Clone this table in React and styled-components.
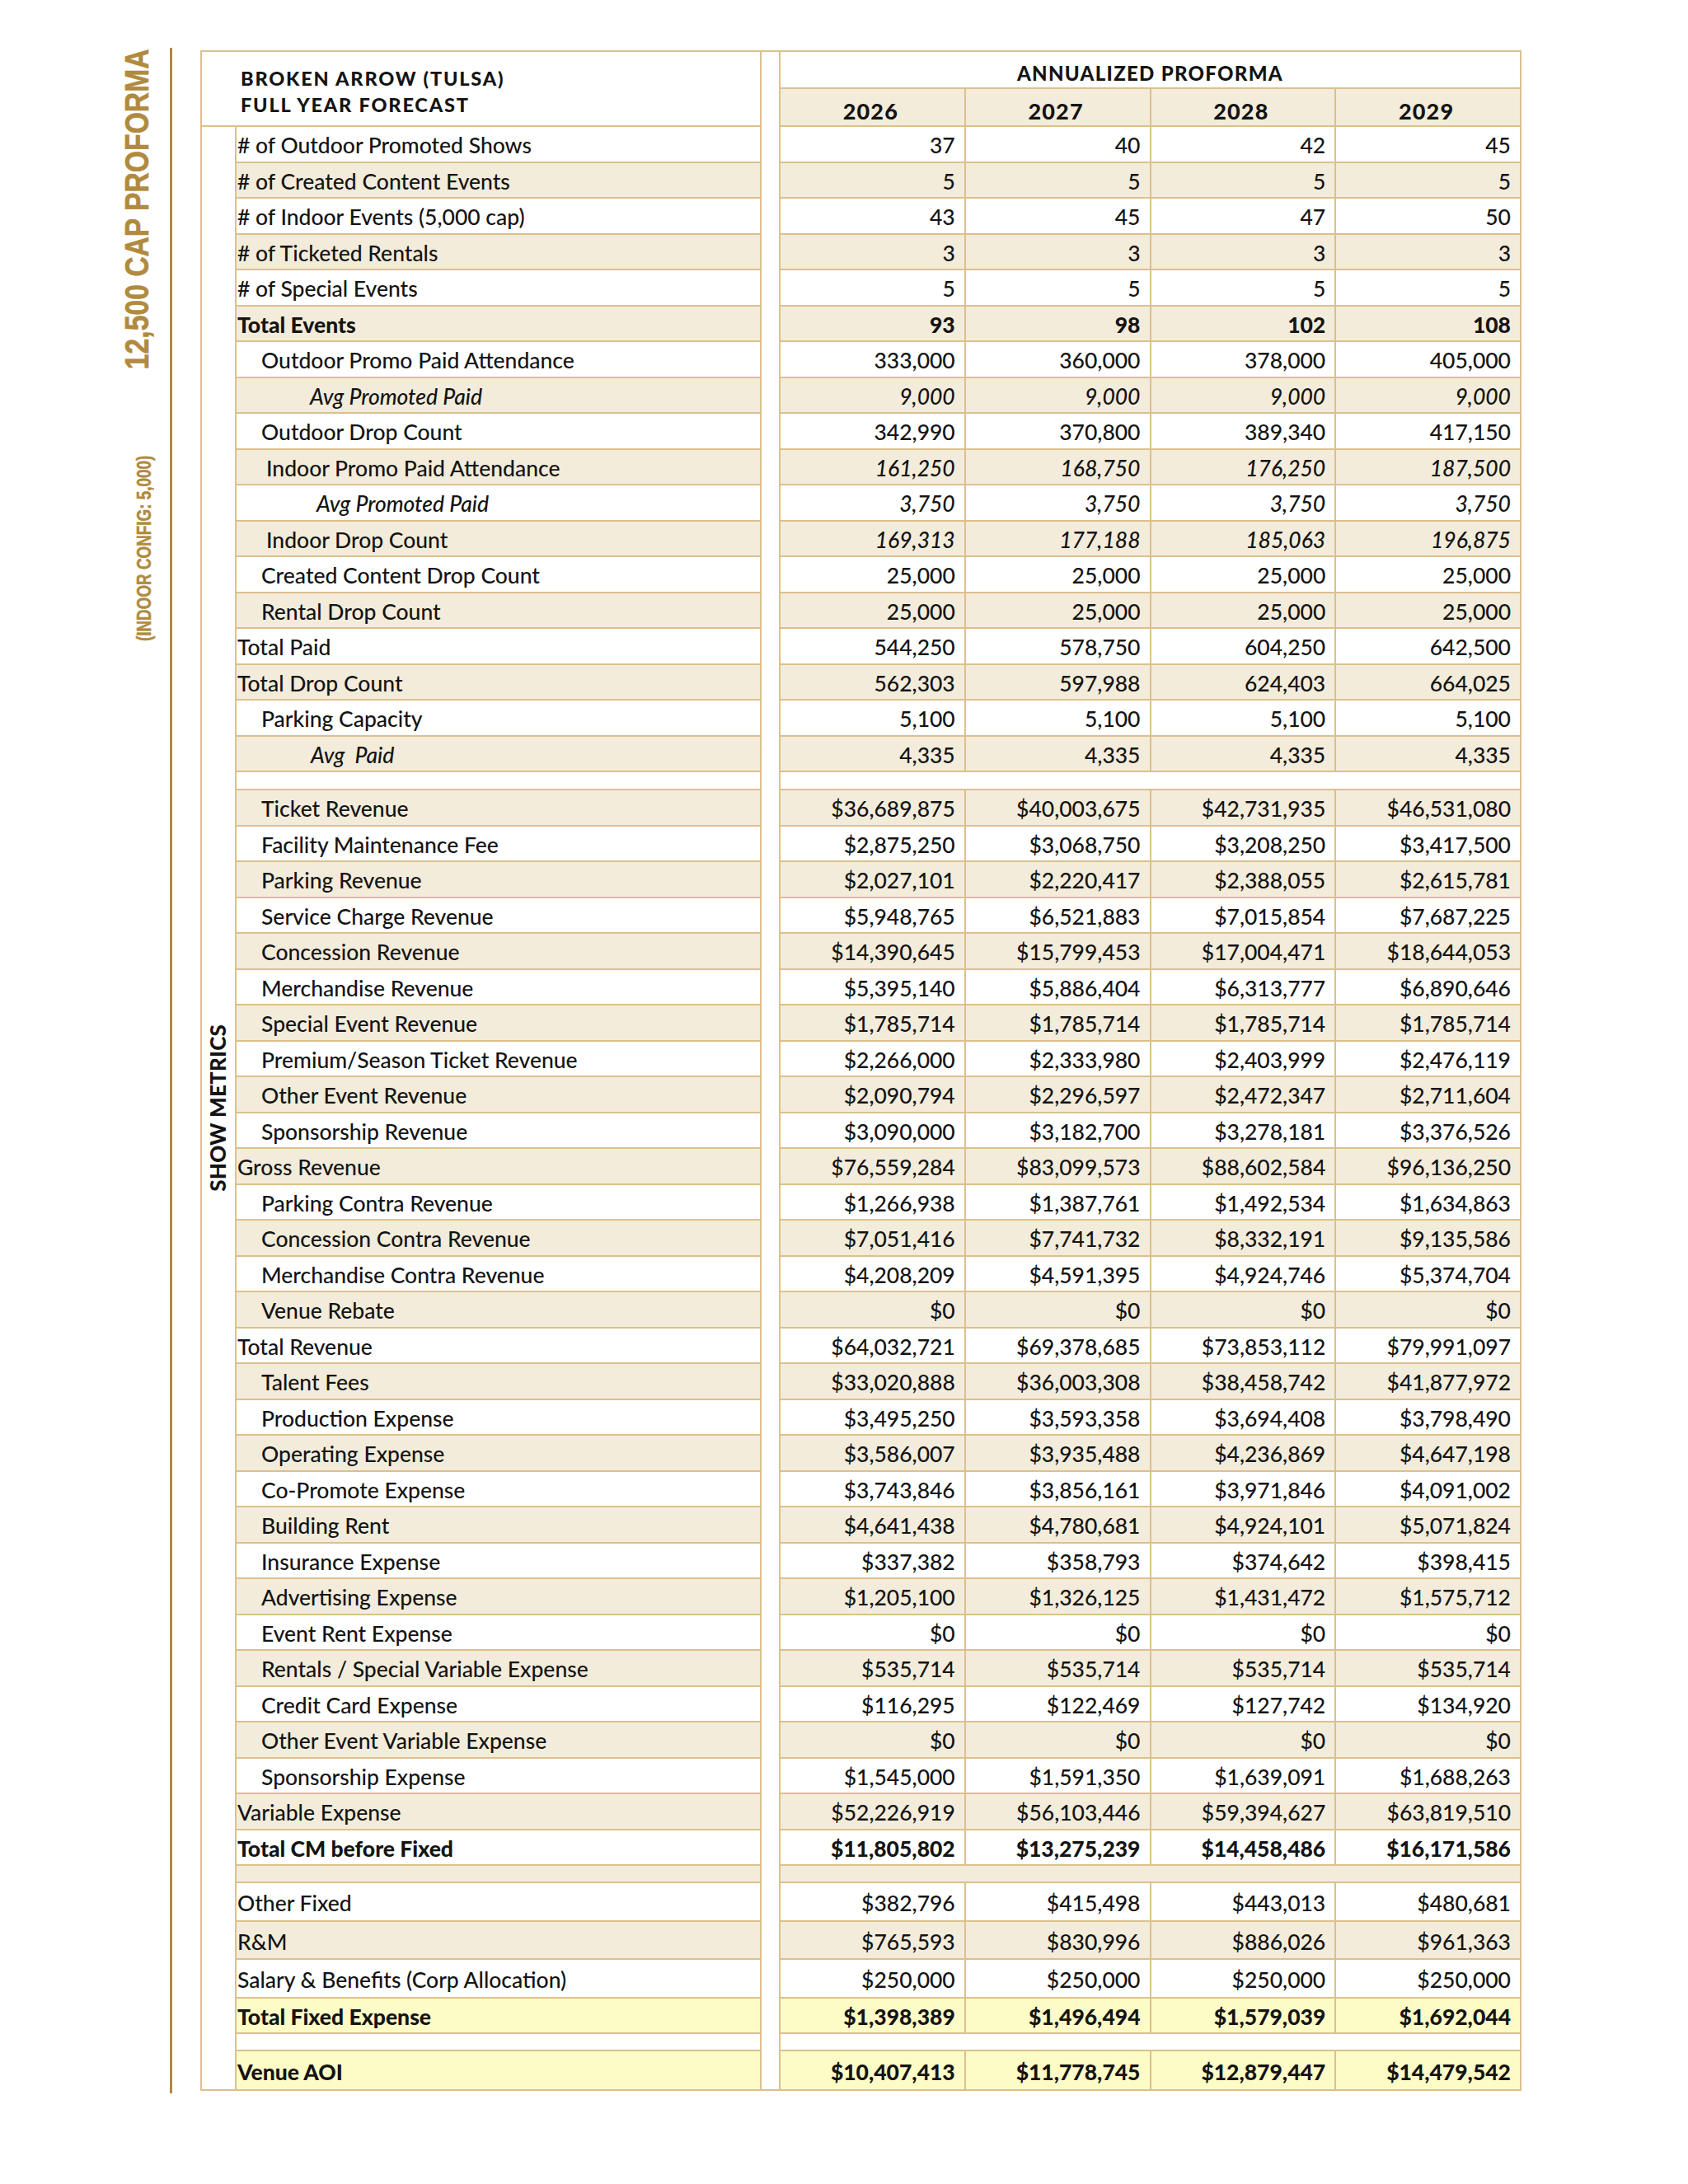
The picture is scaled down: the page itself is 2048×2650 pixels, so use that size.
import React from 'react';
import styled, { createGlobalStyle } from 'styled-components';

const GOLD = '#b08a3e';
const LINE = '#dcc08c';
const BEIGE = '#f3ecdb';
const YELLOW = '#fdfbc6';
const INK = '#141414';

const GlobalStyle = createGlobalStyle`
  html, body { margin: 0; padding: 0; background: #ffffff; }
  body { font-family: Lato, "Noto Sans", Arial, sans-serif; color: ${INK}; }
`;

const Page = styled.main`
  width: 2048px;
  min-height: 2650px;
  box-sizing: border-box;
  display: flex;
  align-items: flex-start;
  padding-top: 58px;
`;

const Side = styled.aside`
  width: 209px;
  height: 2482px;
  box-sizing: border-box;
  border-right: 3px solid ${GOLD};
  display: flex;
  flex-direction: column;
  align-items: flex-end;
  padding: 1px 0 0 0;
  gap: 105px;
  color: ${GOLD};
  font-family: "Liberation Sans", Arial, sans-serif;
  font-weight: 700;
`;

/* fixed slot holding a vertical, condensed label */
const VSlot = styled.div`
  width: ${(p) => p.$w}px;
  height: ${(p) => p.$len}px;
  margin-right: ${(p) => p.$right}px;
  display: flex;
  align-items: center;
  justify-content: center;
`;

const SideTitle = styled.h1`
  margin: 0;
  flex: none;
  writing-mode: vertical-rl;
  transform: rotate(180deg) scaleY(0.842);
  white-space: nowrap;
  line-height: 1;
  font-size: 40px;
  font-weight: 700;
  -webkit-text-stroke: 0.6px ${GOLD};
`;

const SideNote = styled.div`
  flex: none;
  writing-mode: vertical-rl;
  transform: rotate(180deg) scaleY(0.82);
  white-space: nowrap;
  line-height: 1;
  font-size: 23px;
  font-weight: 700;
  -webkit-text-stroke: 0.5px ${GOLD};
`;

const Table = styled.section`
  margin: 3px 0 0 34px;
  width: 1603px;
  box-sizing: border-box;
  border: 2px solid ${LINE};
`;

const Head = styled.header`
  display: grid;
  grid-template-columns: 42px 637px 21px repeat(4, 1fr);
  grid-template-rows: 45px 46px;
`;

const HeadTitle = styled.div`
  grid-column: 1 / 3;
  grid-row: 1 / 3;
  box-sizing: border-box;
  border-right: 2px solid ${LINE};
  border-bottom: 2px solid ${LINE};
  display: flex;
  flex-direction: column;
  justify-content: center;
  padding: 7px 0 0 47px;
  font-size: 23.5px;
  font-weight: 900;
  line-height: 32px;
  letter-spacing: 1.8px;
`;

const HeadGap = styled.div`
  grid-column: 3;
  grid-row: 1 / 3;
`;

const ProformaTitle = styled.div`
  grid-column: 4 / 8;
  grid-row: 1;
  box-sizing: border-box;
  border-left: 2px solid ${LINE};
  border-bottom: 2px solid ${LINE};
  display: flex;
  align-items: center;
  justify-content: center;
  padding: 8px 0 0 0;
  font-size: 24px;
  font-weight: 900;
  letter-spacing: 1.3px;
`;

const YearCell = styled.div`
  grid-row: 2;
  box-sizing: border-box;
  background: ${BEIGE};
  border-left: 2px solid ${LINE};
  border-bottom: 2px solid ${LINE};
  display: flex;
  align-items: center;
  justify-content: center;
  padding: 8px 4px 0 0;
  font-size: 27px;
  font-weight: 900;
  letter-spacing: 1.2px;
`;

const Body = styled.div`
  display: flex;
`;

const SectionTag = styled.div`
  width: 42px;
  box-sizing: border-box;
  border-right: 2px solid ${LINE};
  display: flex;
  align-items: center;
  justify-content: center;
`;

const SectionTagText = styled.span`
  writing-mode: vertical-rl;
  transform: rotate(180deg);
  white-space: nowrap;
  font-size: 26px;
  font-weight: 900;
  line-height: 1;
  letter-spacing: 0.2px;
  margin-left: -3px;
`;

const Rows = styled.div`
  flex: 1;
  display: flex;
  flex-direction: column;
`;

const toneColor = (tone) => (tone === 'beige' ? BEIGE : tone === 'yellow' ? YELLOW : '#ffffff');

const Row = styled.div`
  display: grid;
  grid-template-columns: 637px 21px repeat(4, 1fr);
  height: ${(p) => p.$h}px;
  font-weight: ${(p) => (p.$bold ? 900 : 500)};
`;

const LabelCell = styled.div`
  box-sizing: border-box;
  background: ${(p) => toneColor(p.$tone)};
  border-right: 2px solid ${LINE};
  border-bottom: ${(p) => (p.$last ? 'none' : `2px solid ${LINE}`)};
  display: flex;
  align-items: center;
  padding-left: ${(p) => p.$indent}px;
  padding-top: 3px;
  font-size: 26.5px;
  font-style: ${(p) => (p.$italic ? 'italic' : 'normal')};
  white-space: pre;
`;

const GapCell = styled.div`
  background: #ffffff;
`;

const ValueCell = styled.div`
  box-sizing: border-box;
  background: ${(p) => toneColor(p.$tone)};
  border-left: 2px solid ${LINE};
  border-bottom: ${(p) => (p.$last ? 'none' : `2px solid ${LINE}`)};
  display: flex;
  align-items: center;
  justify-content: flex-end;
  padding: 3px 11px 0 0;
  font-size: 26.5px;
  font-style: ${(p) => (p.$italic ? 'italic' : 'normal')};
  white-space: nowrap;
`;

const SpanCell = styled.div`
  grid-column: 3 / 7;
  box-sizing: border-box;
  background: ${(p) => toneColor(p.$tone)};
  border-left: 2px solid ${LINE};
  border-bottom: 2px solid ${LINE};
`;

const R = 43.5;

// [label, values, opts]
const rows = [
  ['# of Outdoor Promoted Shows', ['37', '40', '42', '45']],
  ['# of Created Content Events', ['5', '5', '5', '5']],
  ['# of Indoor Events (5,000 cap)', ['43', '45', '47', '50']],
  ['# of Ticketed Rentals', ['3', '3', '3', '3']],
  ['# of Special Events', ['5', '5', '5', '5']],
  ['Total Events', ['93', '98', '102', '108'], { bold: true }],
  ['Outdoor Promo Paid Attendance', ['333,000', '360,000', '378,000', '405,000'], { indent: 30 }],
  ['Avg Promoted Paid', ['9,000', '9,000', '9,000', '9,000'], { indent: 89, italic: true, valItalic: true }],
  ['Outdoor Drop Count', ['342,990', '370,800', '389,340', '417,150'], { indent: 30 }],
  ['Indoor Promo Paid Attendance', ['161,250', '168,750', '176,250', '187,500'], { indent: 36, valItalic: true }],
  ['Avg Promoted Paid', ['3,750', '3,750', '3,750', '3,750'], { indent: 97, italic: true, valItalic: true }],
  ['Indoor Drop Count', ['169,313', '177,188', '185,063', '196,875'], { indent: 36, valItalic: true }],
  ['Created Content Drop Count', ['25,000', '25,000', '25,000', '25,000'], { indent: 30 }],
  ['Rental Drop Count', ['25,000', '25,000', '25,000', '25,000'], { indent: 30 }],
  ['Total Paid', ['544,250', '578,750', '604,250', '642,500']],
  ['Total Drop Count', ['562,303', '597,988', '624,403', '664,025']],
  ['Parking Capacity', ['5,100', '5,100', '5,100', '5,100'], { indent: 30 }],
  ['Avg  Paid', ['4,335', '4,335', '4,335', '4,335'], { indent: 90, italic: true }],
  [null, null, { h: 22 }],
  ['Ticket Revenue', ['$36,689,875', '$40,003,675', '$42,731,935', '$46,531,080'], { indent: 30 }],
  ['Facility Maintenance Fee', ['$2,875,250', '$3,068,750', '$3,208,250', '$3,417,500'], { indent: 30 }],
  ['Parking Revenue', ['$2,027,101', '$2,220,417', '$2,388,055', '$2,615,781'], { indent: 30 }],
  ['Service Charge Revenue', ['$5,948,765', '$6,521,883', '$7,015,854', '$7,687,225'], { indent: 30 }],
  ['Concession Revenue', ['$14,390,645', '$15,799,453', '$17,004,471', '$18,644,053'], { indent: 30 }],
  ['Merchandise Revenue', ['$5,395,140', '$5,886,404', '$6,313,777', '$6,890,646'], { indent: 30 }],
  ['Special Event Revenue', ['$1,785,714', '$1,785,714', '$1,785,714', '$1,785,714'], { indent: 30 }],
  ['Premium/Season Ticket Revenue', ['$2,266,000', '$2,333,980', '$2,403,999', '$2,476,119'], { indent: 30 }],
  ['Other Event Revenue', ['$2,090,794', '$2,296,597', '$2,472,347', '$2,711,604'], { indent: 30 }],
  ['Sponsorship Revenue', ['$3,090,000', '$3,182,700', '$3,278,181', '$3,376,526'], { indent: 30 }],
  ['Gross Revenue', ['$76,559,284', '$83,099,573', '$88,602,584', '$96,136,250']],
  ['Parking Contra Revenue', ['$1,266,938', '$1,387,761', '$1,492,534', '$1,634,863'], { indent: 30 }],
  ['Concession Contra Revenue', ['$7,051,416', '$7,741,732', '$8,332,191', '$9,135,586'], { indent: 30 }],
  ['Merchandise Contra Revenue', ['$4,208,209', '$4,591,395', '$4,924,746', '$5,374,704'], { indent: 30 }],
  ['Venue Rebate', ['$0', '$0', '$0', '$0'], { indent: 30 }],
  ['Total Revenue', ['$64,032,721', '$69,378,685', '$73,853,112', '$79,991,097']],
  ['Talent Fees', ['$33,020,888', '$36,003,308', '$38,458,742', '$41,877,972'], { indent: 30 }],
  ['Production Expense', ['$3,495,250', '$3,593,358', '$3,694,408', '$3,798,490'], { indent: 30 }],
  ['Operating Expense', ['$3,586,007', '$3,935,488', '$4,236,869', '$4,647,198'], { indent: 30 }],
  ['Co-Promote Expense', ['$3,743,846', '$3,856,161', '$3,971,846', '$4,091,002'], { indent: 30 }],
  ['Building Rent', ['$4,641,438', '$4,780,681', '$4,924,101', '$5,071,824'], { indent: 30 }],
  ['Insurance Expense', ['$337,382', '$358,793', '$374,642', '$398,415'], { indent: 30 }],
  ['Advertising Expense', ['$1,205,100', '$1,326,125', '$1,431,472', '$1,575,712'], { indent: 30 }],
  ['Event Rent Expense', ['$0', '$0', '$0', '$0'], { indent: 30 }],
  ['Rentals / Special Variable Expense', ['$535,714', '$535,714', '$535,714', '$535,714'], { indent: 30 }],
  ['Credit Card Expense', ['$116,295', '$122,469', '$127,742', '$134,920'], { indent: 30 }],
  ['Other Event Variable Expense', ['$0', '$0', '$0', '$0'], { indent: 30 }],
  ['Sponsorship Expense', ['$1,545,000', '$1,591,350', '$1,639,091', '$1,688,263'], { indent: 30 }],
  ['Variable Expense', ['$52,226,919', '$56,103,446', '$59,394,627', '$63,819,510']],
  ['Total CM before Fixed', ['$11,805,802', '$13,275,239', '$14,458,486', '$16,171,586'], { bold: true }],
  [null, null, { h: 21 }],
  ['Other Fixed', ['$382,796', '$415,498', '$443,013', '$480,681'], { h: 46.7 }],
  ['R&M', ['$765,593', '$830,996', '$886,026', '$961,363'], { h: 46.7 }],
  ['Salary & Benefits (Corp Allocation)', ['$250,000', '$250,000', '$250,000', '$250,000'], { h: 46.7 }],
  ['Total Fixed Expense', ['$1,398,389', '$1,496,494', '$1,579,039', '$1,692,044'], { bold: true, tone: 'yellow', h: 43 }],
  [null, null, { h: 21 }],
  ['Venue AOI', ['$10,407,413', '$11,778,745', '$12,879,447', '$14,479,542'], { bold: true, tone: 'yellow', h: 46, last: true }],
];

const years = ['2026', '2027', '2028', '2029'];

export default function App() {
  return (
    <>
      <GlobalStyle />
      <Page>
        <Side>
          <VSlot $w={40} $len={389} $right={20}>
            <SideTitle>12,500 CAP PROFORMA</SideTitle>
          </VSlot>
          <VSlot $w={23} $len={224} $right={19}>
            <SideNote>(INDOOR CONFIG: 5,000)</SideNote>
          </VSlot>
        </Side>
        <Table>
          <Head>
            <HeadTitle>
              <span>BROKEN ARROW (TULSA)</span>
              <span>FULL YEAR FORECAST</span>
            </HeadTitle>
            <HeadGap />
            <ProformaTitle>ANNUALIZED PROFORMA</ProformaTitle>
            {years.map((y, i) => (
              <YearCell key={y} style={{ gridColumn: i + 4 }}>{y}</YearCell>
            ))}
          </Head>
          <Body>
            <SectionTag>
              <SectionTagText>SHOW METRICS</SectionTagText>
            </SectionTag>
            <Rows>
              {rows.map(([label, values, opts = {}], i) => {
                const tone = opts.tone || (i % 2 === 0 ? 'white' : 'beige');
                const h = opts.h || R;
                if (label === null) {
                  return (
                    <Row key={i} $h={h}>
                      <LabelCell $tone={tone} $indent={0} />
                      <GapCell />
                      <SpanCell $tone={tone} />
                    </Row>
                  );
                }
                return (
                  <Row key={i} $h={h} $bold={opts.bold}>
                    <LabelCell $tone={tone} $indent={opts.indent || 1} $italic={opts.italic} $last={opts.last}>
                      {label}
                    </LabelCell>
                    <GapCell />
                    {values.map((v, j) => (
                      <ValueCell key={j} $tone={tone} $italic={opts.valItalic} $last={opts.last}>
                        {v}
                      </ValueCell>
                    ))}
                  </Row>
                );
              })}
            </Rows>
          </Body>
        </Table>
      </Page>
    </>
  );
}
